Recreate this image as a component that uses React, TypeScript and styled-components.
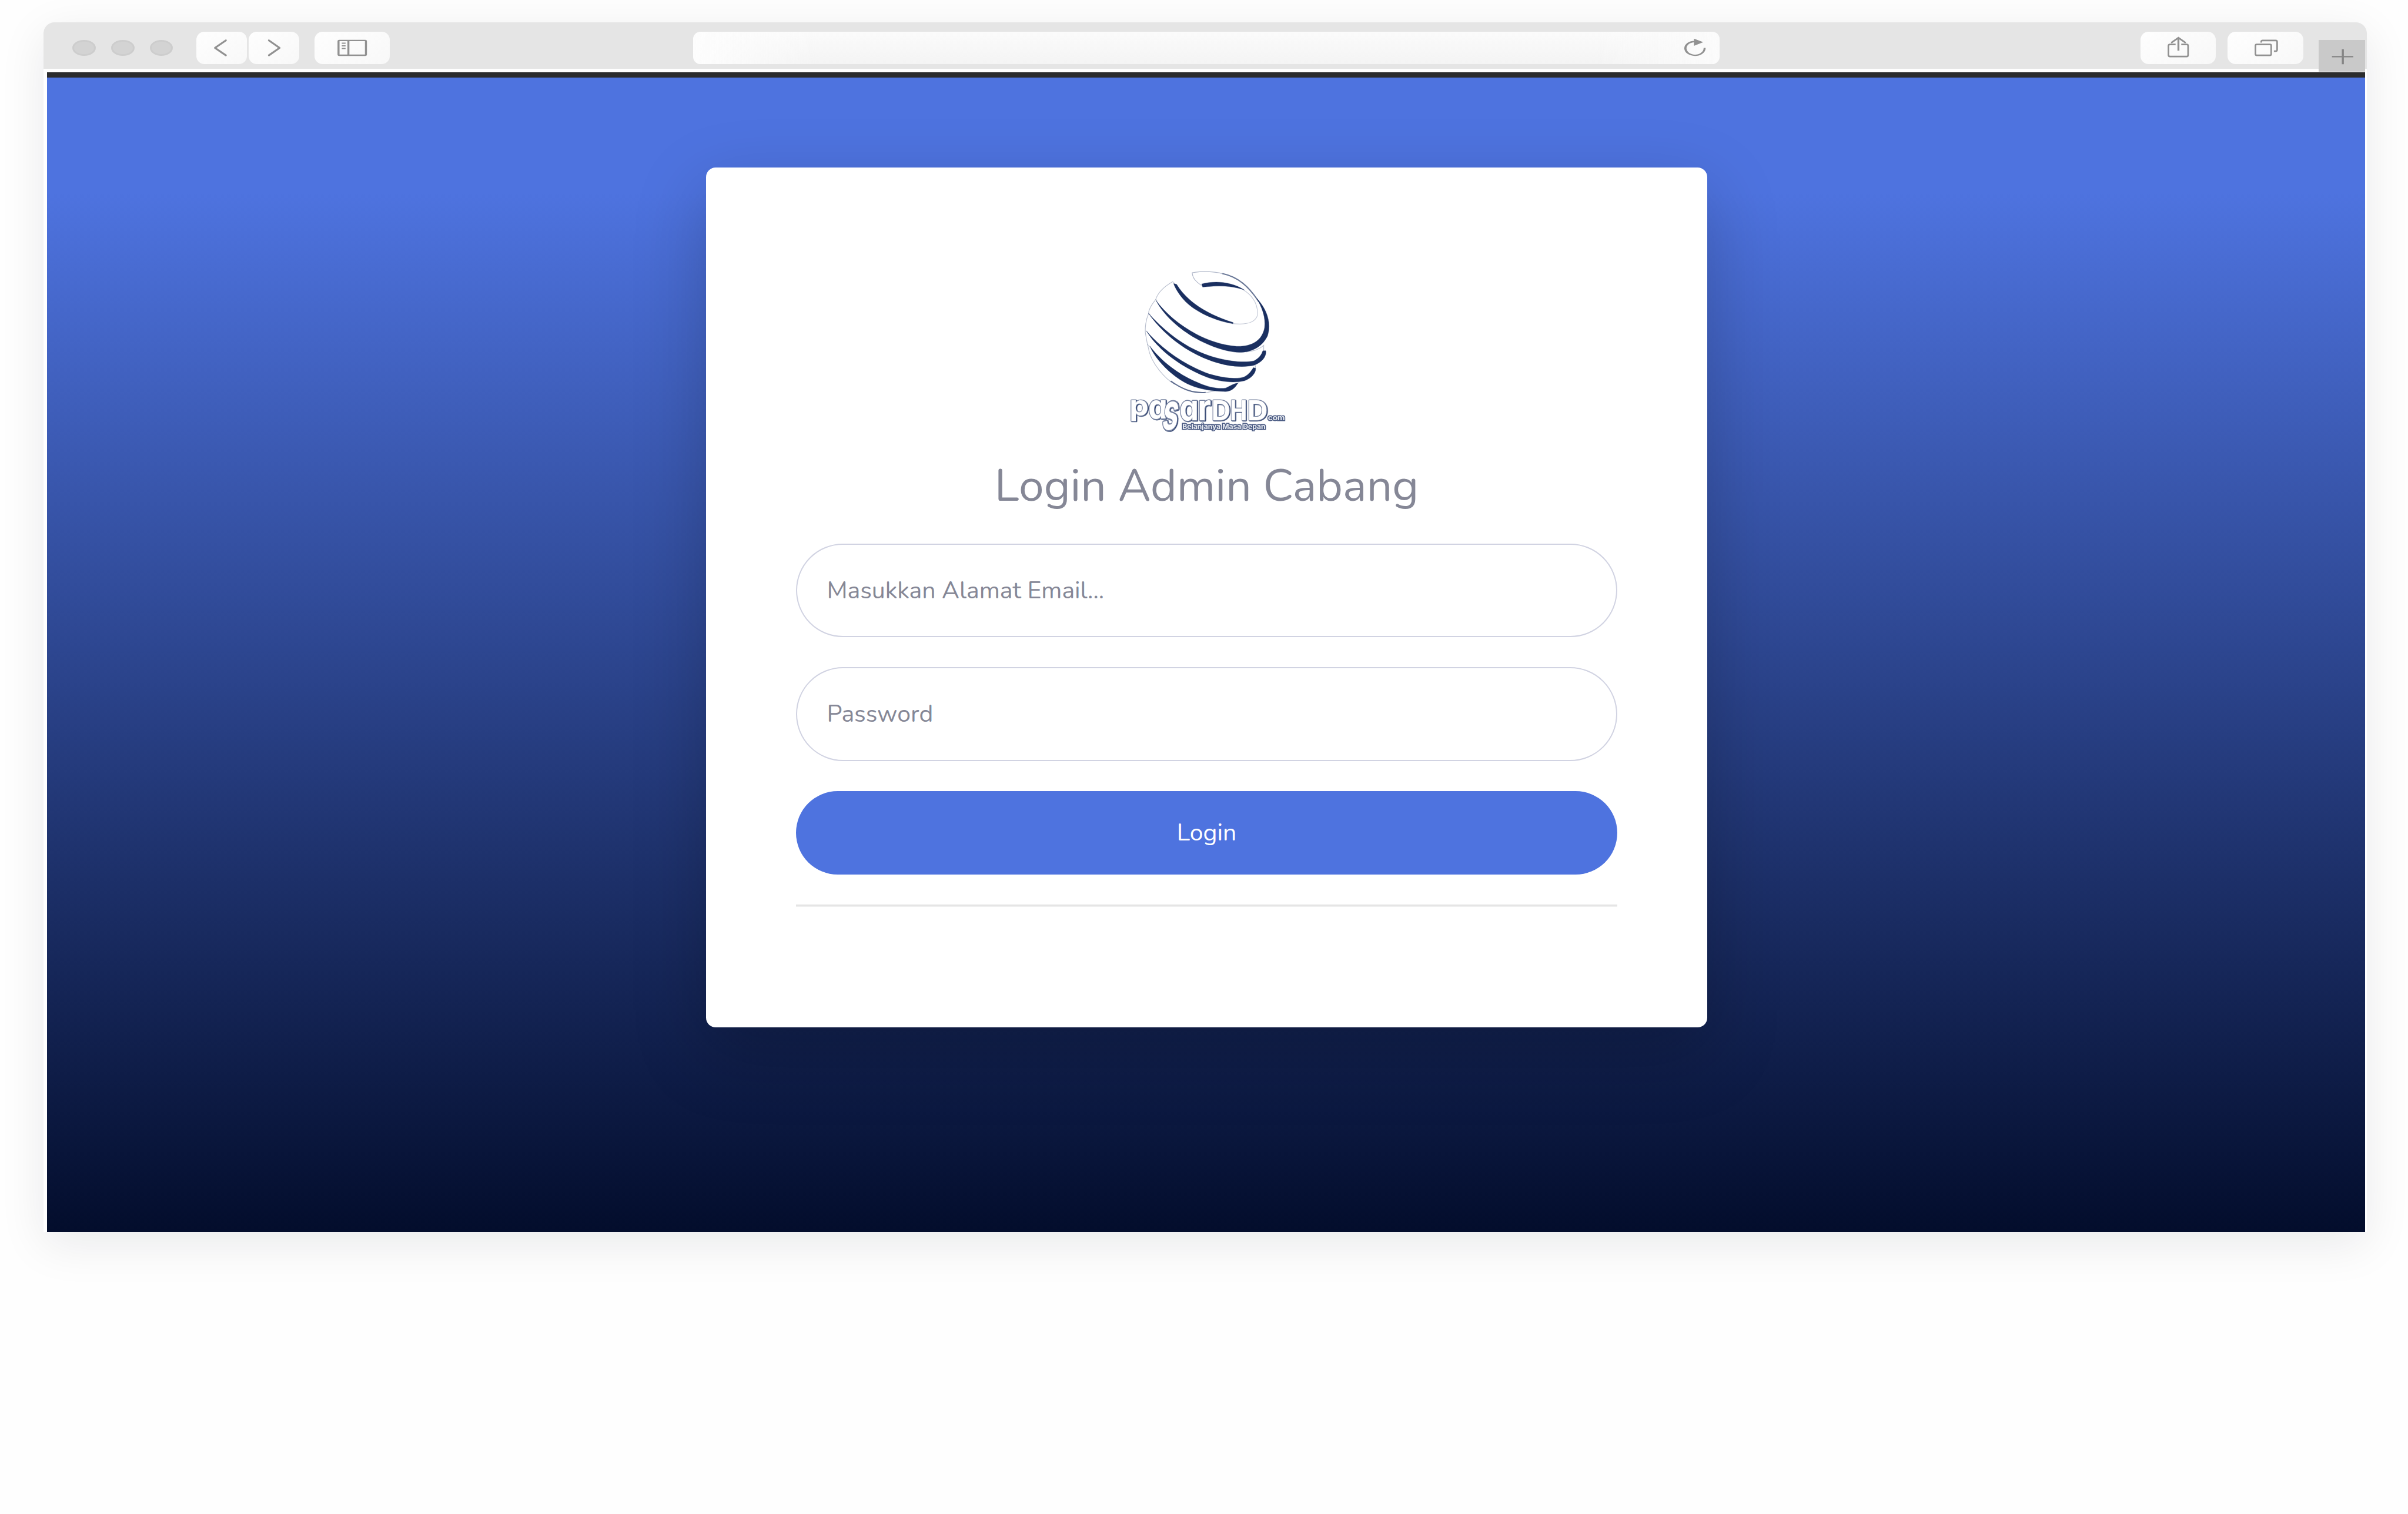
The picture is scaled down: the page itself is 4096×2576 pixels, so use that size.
import React from "react";
import styled, { createGlobalStyle } from "styled-components";

// All sizes are design units; u() converts them to CSS pixels.
const SCALE = 4096 / 5970;
const u = (n: number) => `${Math.round(n * SCALE * 100) / 100}px`;

const GlobalStyle = createGlobalStyle`
  *, *::before, *::after { box-sizing: border-box; }
  html, body { margin: 0; background: #fefefe; overflow: hidden; }
  body { font-family: Nunito, Lato, "Noto Sans", sans-serif; }
`;

const Desktop = styled.main`
  width: 4096px;
  height: 2576px;
  padding: ${u(56)} ${u(102)} 0 ${u(108)};
  background: #fefefe;
`;

const BrowserWindow = styled.section`
  display: flex;
  flex-direction: column;
  height: ${u(2999.5)};
  background: #fff;
  border-radius: ${u(27)} ${u(27)} 0 0;
  box-shadow: 0 ${u(30)} ${u(115)} rgba(8, 20, 30, 0.085);
`;

const Toolbar = styled.header`
  position: relative;
  display: flex;
  align-items: flex-start;
  flex: none;
  height: ${u(114.7)};
  margin-bottom: ${u(9.3)};
  padding: ${u(23)} ${u(158)} 0 ${u(72)};
  background: #e5e5e5;
  border-radius: ${u(27)} ${u(27)} 0 0;
`;

const Lights = styled.div`
  display: flex;
  align-items: center;
  gap: ${u(38.4)};
  height: ${u(80)};
  margin-right: ${u(58)};
`;

const Light = styled.i`
  width: ${u(57.5)};
  height: ${u(40)};
  border: ${u(4.6)} solid #cdcdcd;
  border-radius: 50%;
  background: #d3d3d3;
`;

const ToolButton = styled.button<{ $w: number; $gap?: number }>`
  flex: none;
  width: ${(p) => u(p.$w)};
  height: ${u(80)};
  margin: 0 ${(p) => u(p.$gap ?? 0)} 0 0;
  padding: 0;
  border: 0;
  border-radius: ${u(20)};
  background: linear-gradient(150deg, #fefefe, #f8f8f8);

  svg { display: block; width: 100%; height: 100%; }
`;

const AddressBar = styled.div`
  display: flex;
  justify-content: flex-end;
  flex: none;
  width: ${u(2545)};
  height: ${u(80)};
  margin: 0 auto 0 0;
  border-radius: ${u(18)};
  background: linear-gradient(90deg, #fdfdfd, rgba(253, 253, 253, 0) 12%, rgba(253, 253, 253, 0) 88%, #fbfbfb),
    linear-gradient(180deg, #fbfbfb, #f4f4f4);

  svg { display: block; width: ${u(103)}; height: 100%; }
`;

const NewTab = styled.button`
  position: absolute;
  right: ${u(5)};
  top: ${u(43)};
  width: ${u(115)};
  height: ${u(79.5)};
  padding: 0;
  border: 0;
  background: #c9c9c9;

  svg { display: block; width: 100%; height: 100%; }
`;

const Page = styled.div`
  flex: 1;
  display: flex;
  justify-content: center;
  align-items: flex-start;
  margin: 0 ${u(4)} 0 ${u(8)};
  padding-top: ${u(222)};
  border-top: 9px solid #2b2c2d;
  background: linear-gradient(180deg, #4e73df 10%, #030d2c 100%);
`;

const Card = styled.form`
  display: flex;
  flex-direction: column;
  align-items: center;
  width: ${u(2483)};
  height: ${u(2132)};
  margin-left: ${u(3)};
  padding: ${u(225)} ${u(223)} 0;
  border-radius: ${u(24)};
  background: #fff;
  box-shadow: 0 ${u(60)} ${u(180)} rgba(0, 0, 0, 0.21);
`;

const LogoArt = styled.svg`
  flex: none;
  display: block;
  width: ${u(460)};
  height: ${u(460)};
  margin-left: ${u(-5)};
`;

const Title = styled.h1`
  margin: ${u(26)} 0 ${u(61.5)};
  flex: none;
  height: ${u(160)};
  line-height: ${u(160)};
  font-size: ${u(111.7)};
  font-weight: 400;
  white-space: nowrap;
  color: #858796;
`;

const Field = styled.div`
  display: flex;
  align-items: center;
  flex: none;
  width: 100%;
  height: ${u(232.5)};
  margin-bottom: ${u(74.5)};
  padding-left: ${u(74)};
  border: 2px solid #d1d3e2;
  border-radius: ${u(117)};
  font-size: ${u(59.7)};
  color: #858796;
`;

const Submit = styled.button`
  flex: none;
  width: 100%;
  height: ${u(207)};
  padding: 0;
  border: 0;
  border-radius: ${u(104)};
  background: #4e73df;
  font: 400 ${u(59.7)} Nunito, Lato, "Noto Sans", sans-serif;
  color: #fff;
`;

const Rule = styled.hr`
  width: 100%;
  height: 4px;
  margin: ${u(75)} 0 0;
  border: 0;
  background: linear-gradient(#e3e3e3 50%, #efefef 50%);
`;

const INK = "#919191";
const NAVY = "#1a2f60";

const Chevron = ({ forward }: { forward?: boolean }) => (
  <svg viewBox="0 0 124 80" preserveAspectRatio="none" fill="none" stroke={INK} strokeWidth="4.6" strokeLinecap="round" strokeLinejoin="round">
    <path d={forward ? "M50 21.5 76.500 40 50 58.500" : "M73 21.5 46 40 73 58.500"} />
  </svg>
);

const SidebarIcon = () => (
  <svg viewBox="0 0 187 80" preserveAspectRatio="none">
    <path fill={INK} fillRule="evenodd" d="M61 20H126Q130 20 130 24V56Q130 60 126 60H61Q57 60 57 56V24Q57 20 61 20ZM62 23.500V56.500H81.500V23.500ZM86.500 23.500V56.500H125V23.500Z" />
    <path fill={INK} d="M67.500 27h9.500v3h-9.500zM67.500 33.500h9.500v3h-9.500zM67.500 40h9.500v3h-9.500z" />
  </svg>
);

const ReloadIcon = () => (
  <svg viewBox="4160 79 103 80" preserveAspectRatio="none">
    <path fill={INK} d="M4229 119C4229 130.500 4217.500 139 4202.500 139S4176 130.500 4176 120.300 4187 102 4201 101.700V105.200C4190 105.500 4181.500 112 4181.500 120.300S4191 135.800 4202.500 135.800 4224 129 4224 119Z" />
    <path fill={INK} d="M4200 96 4223 105 4200 114Z" />
  </svg>
);

const ShareIcon = () => (
  <svg viewBox="5307 79 187 80" preserveAspectRatio="none" fill="none" stroke={INK}>
    <path strokeWidth="4" d="M5394 110.700H5380Q5376.300 110.700 5376.300 114V137Q5376.300 140.300 5380 140.300H5421.500Q5425 140.300 5425 137V114Q5425 110.700 5421.500 110.700H5408" />
    <path strokeWidth="4.800" d="M5401 126V95" />
    <path strokeWidth="4" d="M5383 106.500 5401 94 5419 106.500" />
  </svg>
);

const TabsIcon = () => (
  <svg viewBox="5523 79 187 80" preserveAspectRatio="none" fill="none" stroke={INK} strokeWidth="4">
    <rect x="5592.300" y="110.700" width="39" height="26.700" rx="3" />
    <path d="M5606.500 106V104Q5606.500 100.700 5610 100.700H5642.500Q5646 100.700 5646 104V124Q5646 127.300 5642 127.300H5638" />
  </svg>
);

const PlusIcon = () => (
  <svg viewBox="5748 99 115 79.500" preserveAspectRatio="none">
    <path fill="#858585" d="M5781 138.700h53v3.300h-53zM5805.500 122h5v37h-5z" />
    <path fill="#dcdcdc" d="M5748 177.500h115v1h-115z" />
  </svg>
);

// One wordmark letter: [character, x, baseline, x scale, y scale, skew]
const LETTERS: [string, number, number, number, number, number][] = [
  ["p", 124, 1173, 2.25, 2.06, 0],
  ["a", 264, 1194, 2.25, 2.45, 0],
  ["s", 358, 1275, 2.1, 3.8, -8],
  ["a", 496, 1206, 2.25, 2.65, 0],
  ["r", 632, 1206, 2.4, 2.65, 0],
  ["D", 733, 1206, 1.95, 2.03, 0],
  ["H", 871, 1206, 1.7, 2.03, 0],
  ["D", 1000, 1206, 2.1, 2.03, 0],
];

const Wordmark = styled.g`
  font-family: Inter, "DejaVu Sans", sans-serif;
  font-weight: 700;
  font-feature-settings: "cv11";
  paint-order: stroke;
  stroke-linejoin: round;
  fill: #fff;
  stroke: #75819f;
  filter: drop-shadow(5px 3px 0 ${NAVY});
`;

const SmallPrint = styled.g`
  font-family: Inter, "DejaVu Sans", sans-serif;
  font-weight: 700;
  paint-order: stroke;
  fill: #e9ecf2;
  stroke: #4c5c84;
  stroke-width: 13;
`;

const Logo = () => (
  <LogoArt viewBox="0 0 1380 1380">
    <g fill="none" stroke={NAVY} strokeWidth="5">
      <path opacity=".3" d="M445 176C385 210 335 255 318 310C285 350 265 390 265 415C245 460 238 520 242 560C250 600 255 640 262 660C280 790 400 905 460 940" />
      <path opacity=".25" d="M445 176 462 192M318 305 330 322M265 410 280 425M245 540 262 556M256 640 275 662" />
      <path opacity=".35" d="M658 203C620 180 592 145 590 110C660 96 750 98 820 118" />
      <path opacity=".65" strokeWidth="9" d="M815 116C930 140 1010 210 1085 325" />
      <path opacity=".26" d="M970 236C1040 280 1080 340 1076 425C1060 480 1000 500 890 488" />
      <path opacity=".3" d="M990 699C1040 695 1090 680 1122 650V690M1060 798V820M940 925 925 935M690 1002C710 1000 730 995 760 988" />
      <path opacity=".7" strokeWidth="9" d="M430 915C500 965 580 1008 690 1000" />
    </g>
    <g fill={NAVY} stroke={NAVY} strokeOpacity=".4" strokeWidth="4">
      <path d="M452 190 474 196C550 320 690 415 895 480L893 489C740 464 590 387 520 302C485 260 462 220 452 190Z" />
      <path d="M660 193C760 168 880 175 978 238C880 203 780 205 668 216Z" />
      <path d="M1070 300C1150 385 1180 490 1150 580C1100 680 1000 712 900 699C700 672 430 520 320 315C450 490 690 640 920 657C1040 660 1110 610 1128 520C1138 440 1110 370 1070 300Z" />
      <path d="M1137 690C1145 730 1110 775 1050 798C960 818 850 805 740 768C540 700 370 560 266 413C400 560 560 684 760 740C880 772 980 780 1050 765C1090 745 1108 715 1115 690Z" />
      <path d="M1062 820C1065 855 1030 895 980 913C900 932 800 922 700 887C520 815 350 700 251 545C370 680 530 795 720 864C830 895 920 903 975 885C1010 868 1030 840 1045 815Z" />
      <path d="M930 930C905 975 870 998 820 993C700 987 600 970 500 905C400 840 310 740 275 655C360 770 500 875 640 930C720 965 790 975 840 967C875 950 895 935 930 930Z" />
    </g>
    <Wordmark>
      {LETTERS.map(([ch, x, y, sx, sy, skew], i) => (
        <text key={i} fontSize="100" strokeWidth="5" transform={`translate(${x} ${y}) skewX(${skew}) scale(${sx} ${sy})`}>{ch}</text>
      ))}
    </Wordmark>
    <SmallPrint>
      <text x="1153" y="1206" fontSize="56" textLength="126" lengthAdjust="spacingAndGlyphs">com</text>
      <text x="517" y="1271" fontSize="50" textLength="618" lengthAdjust="spacingAndGlyphs">Belanjanya Masa Depan</text>
    </SmallPrint>
  </LogoArt>
);

export default function App() {
  return (
    <>
      <GlobalStyle />
      <Desktop>
        <BrowserWindow>
          <Toolbar>
            <Lights>
              <Light />
              <Light />
              <Light />
            </Lights>
            <ToolButton type="button" $w={124.3} $gap={5.5}><Chevron /></ToolButton>
            <ToolButton type="button" $w={124.3} $gap={38}><Chevron forward /></ToolButton>
            <ToolButton type="button" $w={187} $gap={752}><SidebarIcon /></ToolButton>
            <AddressBar><ReloadIcon /></AddressBar>
            <ToolButton type="button" $w={187} $gap={29}><ShareIcon /></ToolButton>
            <ToolButton type="button" $w={187}><TabsIcon /></ToolButton>
            <NewTab type="button"><PlusIcon /></NewTab>
          </Toolbar>
          <Page>
            <Card>
              <Logo />
              <Title>Login Admin Cabang</Title>
              <Field>Masukkan Alamat Email...</Field>
              <Field>Password</Field>
              <Submit type="button">Login</Submit>
              <Rule />
            </Card>
          </Page>
        </BrowserWindow>
      </Desktop>
    </>
  );
}
